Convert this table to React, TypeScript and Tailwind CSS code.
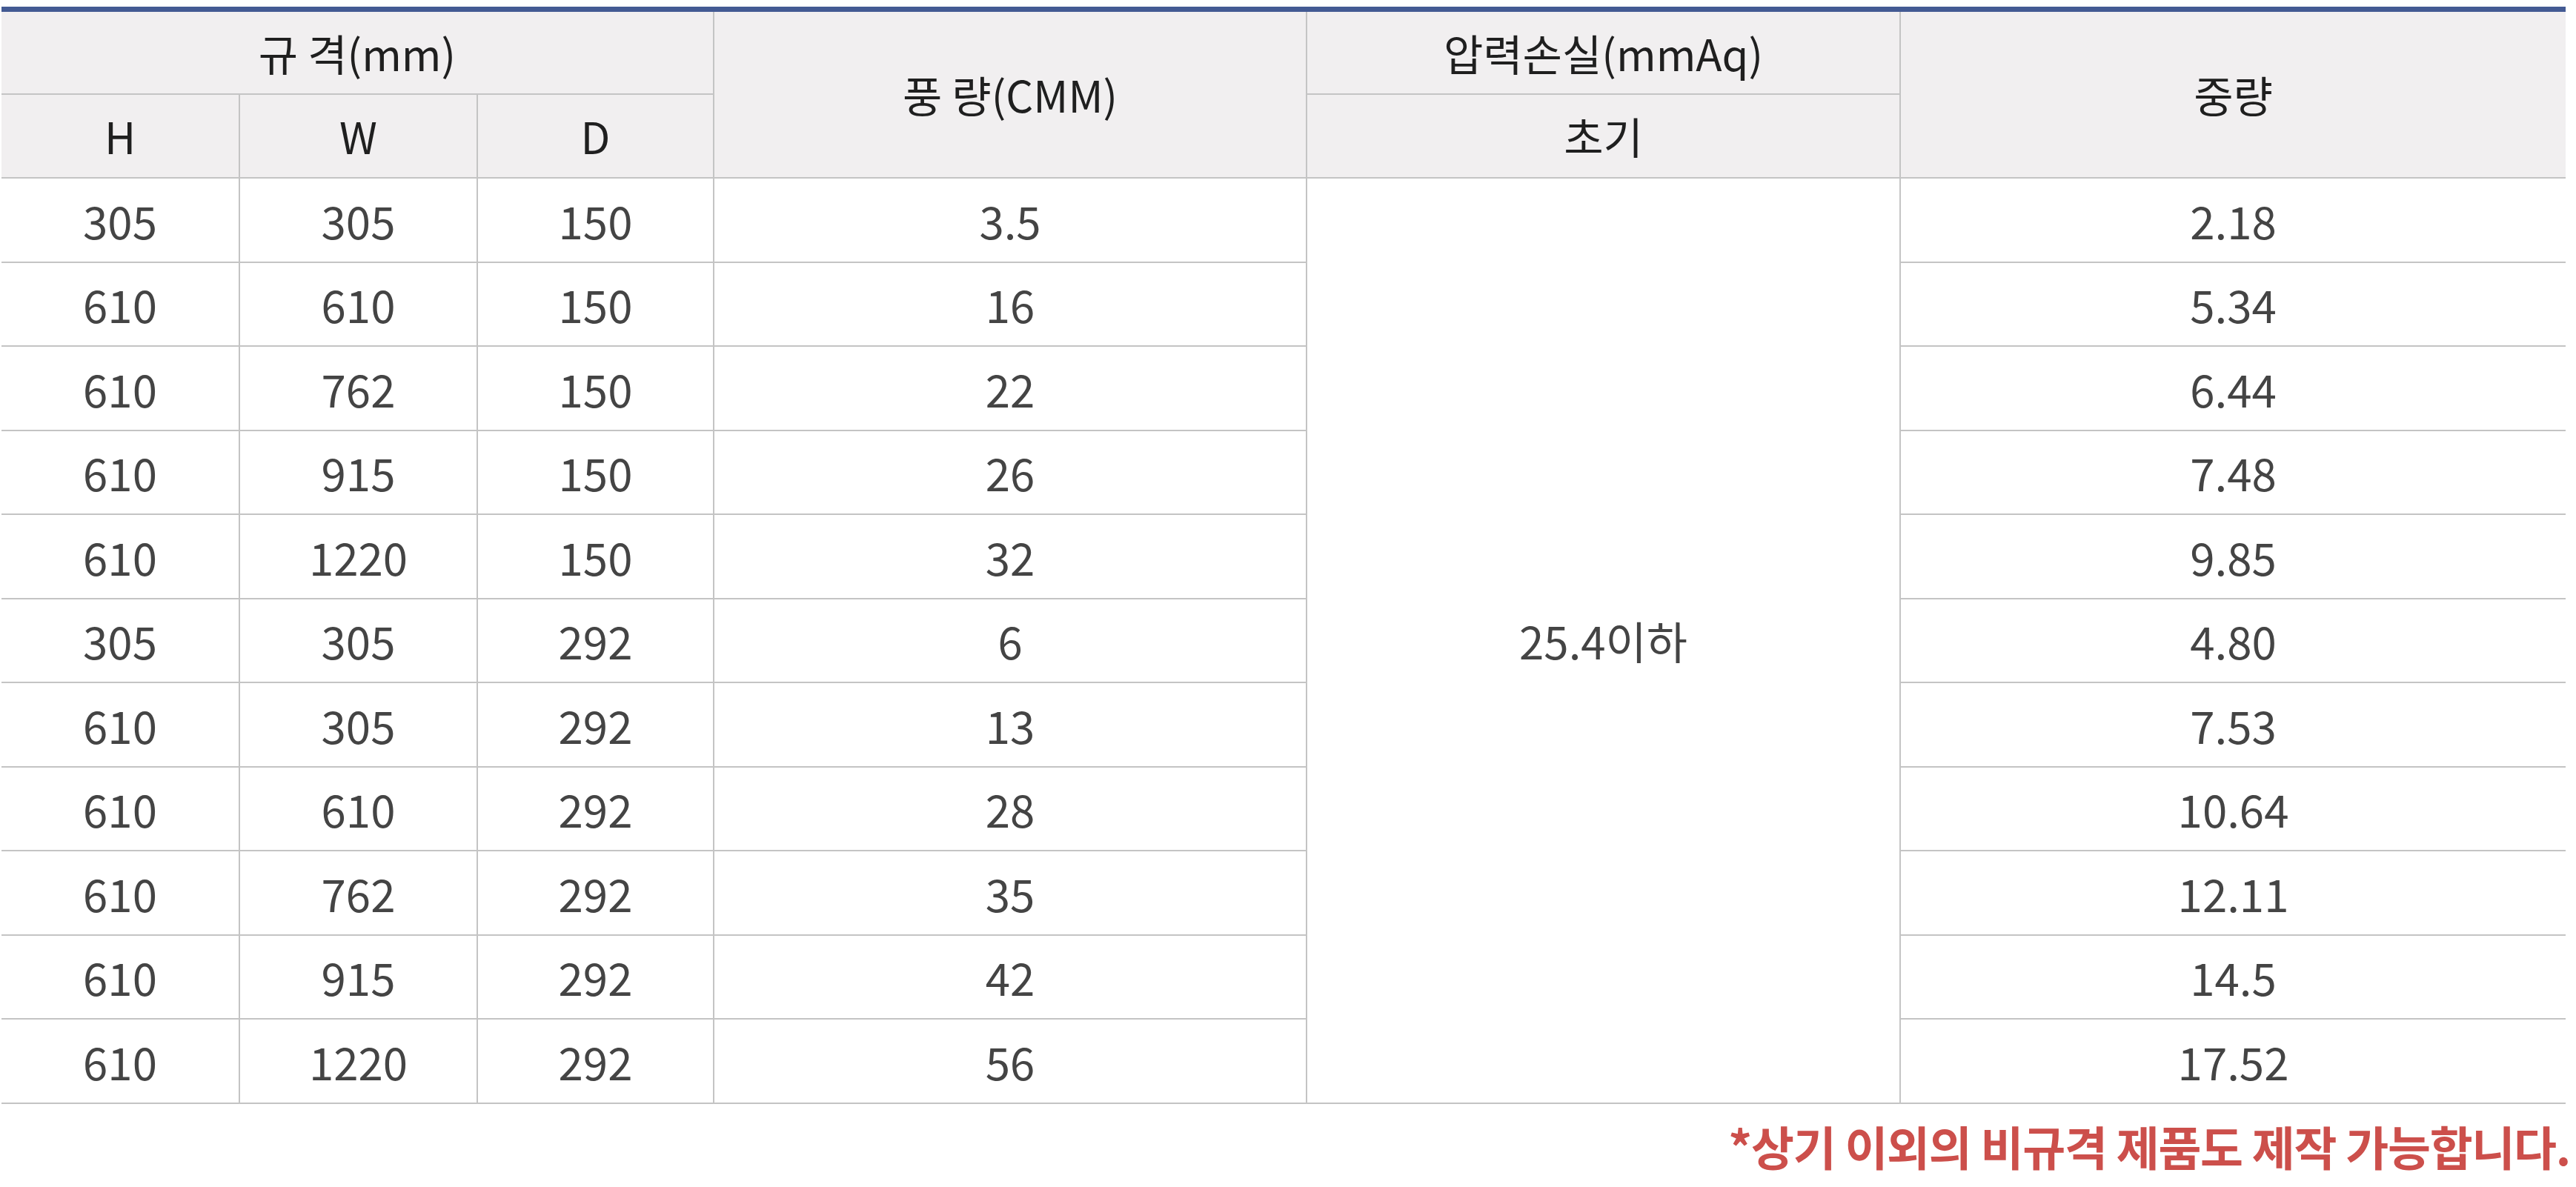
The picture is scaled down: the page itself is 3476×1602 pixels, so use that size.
import React from "react";

const rows: [string, string, string, string, string][] = [
  ["305", "305", "150", "3.5", "2.18"],
  ["610", "610", "150", "16", "5.34"],
  ["610", "762", "150", "22", "6.44"],
  ["610", "915", "150", "26", "7.48"],
  ["610", "1220", "150", "32", "9.85"],
  ["305", "305", "292", "6", "4.80"],
  ["610", "305", "292", "13", "7.53"],
  ["610", "610", "292", "28", "10.64"],
  ["610", "762", "292", "35", "12.11"],
  ["610", "915", "292", "42", "14.5"],
  ["610", "1220", "292", "56", "17.52"],
];

const font = { fontFamily: '"Noto Sans CJK KR", "Noto Sans", sans-serif' };

export default function App() {
  const th =
    "bg-[#f1eff0] text-[#1f1f1f] font-normal text-[58px] text-center align-middle p-0 border-[#c4c4c4]";
  const td =
    "text-[#444444] font-normal text-[60px] text-center align-middle p-0 border-b-2 border-[#c4c4c4]";
  return (
    <div className="w-[3476px] bg-white pt-[9px] pl-[2px]" style={font}>
      <div className="w-[3460px] border-t-[7px] border-[#435a93]">
        <table className="w-[3460px] table-fixed border-separate border-spacing-0">
          <colgroup>
            <col className="w-[322px]" />
            <col className="w-[321px]" />
            <col className="w-[319px]" />
            <col className="w-[800px]" />
            <col className="w-[801px]" />
            <col className="w-[897px]" />
          </colgroup>
          <thead>
            <tr className="h-[112px]">
              <th colSpan={3} className={`${th} border-r-2 border-b-2`}>
                규 격(mm)
              </th>
              <th rowSpan={2} className={`${th} border-r-2 border-b-2`}>
                풍 량(CMM)
              </th>
              <th className={`${th} border-r-2 border-b-2`}>압력손실(mmAq)</th>
              <th rowSpan={2} className={`${th} border-b-2`}>
                중량
              </th>
            </tr>
            <tr className="h-[113px]">
              <th className={`${th} border-r-2 border-b-2`}>H</th>
              <th className={`${th} border-r-2 border-b-2`}>W</th>
              <th className={`${th} border-r-2 border-b-2`}>D</th>
              <th className={`${th} border-r-2 border-b-2`}>초기</th>
            </tr>
          </thead>
          <tbody>
            {rows.map((r, i) => (
              <tr key={i} className="h-[113.5px]">
                <td className={`${td} border-r-2`}>{r[0]}</td>
                <td className={`${td} border-r-2`}>{r[1]}</td>
                <td className={`${td} border-r-2`}>{r[2]}</td>
                <td className={`${td} border-r-2`}>{r[3]}</td>
                {i === 0 && (
                  <td rowSpan={11} className={`${td} border-r-2`}>
                    25.4이하
                  </td>
                )}
                <td className={td}>{r[4]}</td>
              </tr>
            ))}
          </tbody>
        </table>
      </div>
      <div className="w-[3466px] h-[112px] flex items-center justify-end">
        <span className="text-[63px] font-bold text-[#cc4f4b] tracking-[-0.02em] leading-none">
          *상기 이외의 비규격 제품도 제작 가능합니다.
        </span>
      </div>
    </div>
  );
}
